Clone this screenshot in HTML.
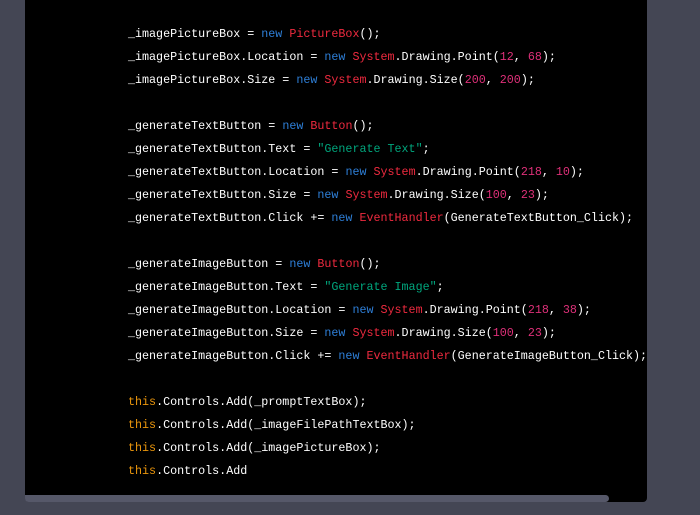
<!DOCTYPE html>
<html><head><style>
html,body{margin:0;padding:0;background:#444654;width:700px;height:515px;overflow:hidden}
.box{position:absolute;left:25px;top:-6px;width:622px;height:508px;background:#000;border-radius:4px;overflow:hidden}
pre{position:absolute;left:103px;top:29px;margin:0;font-family:"Liberation Mono",monospace;font-size:11.7px;line-height:23px;color:#fff;white-space:pre}
.k{color:#2e7fd8}.t{color:#ef2a3f}.s{color:#00a67d}.n{color:#df3079}.th{color:#e9950c}
.sb{position:absolute;left:25px;top:495px;width:584px;height:7px;background:#565869;border-radius:0 4px 4px 4px}
</style></head><body>
<div class="box"><pre>_imagePictureBox = <span class="k">new</span> <span class="t">PictureBox</span>();
_imagePictureBox.Location = <span class="k">new</span> <span class="t">System</span>.Drawing.Point(<span class="n">12</span>, <span class="n">68</span>);
_imagePictureBox.Size = <span class="k">new</span> <span class="t">System</span>.Drawing.Size(<span class="n">200</span>, <span class="n">200</span>);

_generateTextButton = <span class="k">new</span> <span class="t">Button</span>();
_generateTextButton.Text = <span class="s">"Generate Text"</span>;
_generateTextButton.Location = <span class="k">new</span> <span class="t">System</span>.Drawing.Point(<span class="n">218</span>, <span class="n">10</span>);
_generateTextButton.Size = <span class="k">new</span> <span class="t">System</span>.Drawing.Size(<span class="n">100</span>, <span class="n">23</span>);
_generateTextButton.Click += <span class="k">new</span> <span class="t">EventHandler</span>(GenerateTextButton_Click);

_generateImageButton = <span class="k">new</span> <span class="t">Button</span>();
_generateImageButton.Text = <span class="s">"Generate Image"</span>;
_generateImageButton.Location = <span class="k">new</span> <span class="t">System</span>.Drawing.Point(<span class="n">218</span>, <span class="n">38</span>);
_generateImageButton.Size = <span class="k">new</span> <span class="t">System</span>.Drawing.Size(<span class="n">100</span>, <span class="n">23</span>);
_generateImageButton.Click += <span class="k">new</span> <span class="t">EventHandler</span>(GenerateImageButton_Click);

<span class="th">this</span>.Controls.Add(_promptTextBox);
<span class="th">this</span>.Controls.Add(_imageFilePathTextBox);
<span class="th">this</span>.Controls.Add(_imagePictureBox);
<span class="th">this</span>.Controls.Add</pre></div>
<div class="sb"></div>
</body></html>
